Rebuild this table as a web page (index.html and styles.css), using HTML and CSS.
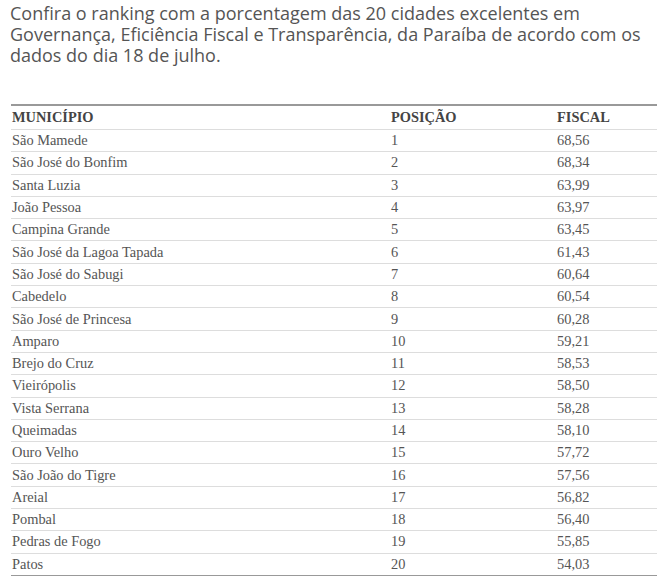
FILE: index.html
```html
<!DOCTYPE html>
<html lang="pt-BR">
<head>
<meta charset="utf-8">
<link rel="stylesheet" href="styles.css">
</head>
<body>
<div class="page">
  <p class="intro">Confira o ranking com a porcentagem das 20 cidades excelentes em Governança, Eficiência Fiscal e Transparência, da Paraíba de acordo com os dados do dia 18 de julho.</p>
  <table class="ranking">
    <thead>
      <tr><th class="c1">MUNICÍPIO</th><th class="c2">POSIÇÃO</th><th class="c3">FISCAL</th></tr>
    </thead>
    <tbody>
      <tr><td>São Mamede</td><td>1</td><td>68,56</td></tr>
      <tr><td>São José do Bonfim</td><td>2</td><td>68,34</td></tr>
      <tr><td>Santa Luzia</td><td>3</td><td>63,99</td></tr>
      <tr><td>João Pessoa</td><td>4</td><td>63,97</td></tr>
      <tr><td>Campina Grande</td><td>5</td><td>63,45</td></tr>
      <tr><td>São José da Lagoa Tapada</td><td>6</td><td>61,43</td></tr>
      <tr><td>São José do Sabugi</td><td>7</td><td>60,64</td></tr>
      <tr><td>Cabedelo</td><td>8</td><td>60,54</td></tr>
      <tr><td>São José de Princesa</td><td>9</td><td>60,28</td></tr>
      <tr><td>Amparo</td><td>10</td><td>59,21</td></tr>
      <tr><td>Brejo do Cruz</td><td>11</td><td>58,53</td></tr>
      <tr><td>Vieirópolis</td><td>12</td><td>58,50</td></tr>
      <tr><td>Vista Serrana</td><td>13</td><td>58,28</td></tr>
      <tr><td>Queimadas</td><td>14</td><td>58,10</td></tr>
      <tr><td>Ouro Velho</td><td>15</td><td>57,72</td></tr>
      <tr><td>São João do Tigre</td><td>16</td><td>57,56</td></tr>
      <tr><td>Areial</td><td>17</td><td>56,82</td></tr>
      <tr><td>Pombal</td><td>18</td><td>56,40</td></tr>
      <tr><td>Pedras de Fogo</td><td>19</td><td>55,85</td></tr>
      <tr><td>Patos</td><td>20</td><td>54,03</td></tr>
    </tbody>
  </table>
</div>
</body>
</html>
```

FILE: styles.css
```css
html, body {
  margin: 0;
  padding: 0;
  background: #fff;
}
.page {
  padding: 3px 3px 0 10px;
}
.intro {
  margin: 0 0 38px 0;
  font-family: "Open Sans", sans-serif;
  font-size: 18px;
  line-height: 21px;
  color: #555;
  width: 645px;
}
.ranking {
  margin-left: 1px;
  width: 646px;
  border-collapse: collapse;
  font-family: "Liberation Serif", "Times New Roman", serif;
  font-size: 14.4px;
  color: #555;
  border-top: 2px solid #999;
  border-bottom: 2px solid #999;
}
.ranking th {
  text-align: left;
  font-weight: bold;
  color: #444;
  height: 23px;
  padding: 0 0 0 1px;
  border-bottom: 1px solid #ddd;
}
.ranking td {
  text-align: left;
  height: 21.3px;
  padding: 0 0 0 1px;
  border-bottom: 1px solid #ddd;
}
.ranking tbody tr:last-child td {
  border-bottom: none;
}
.c1 { width: 378px; }
.c2 { width: 165px; }
.c3 { width: auto; }
```
